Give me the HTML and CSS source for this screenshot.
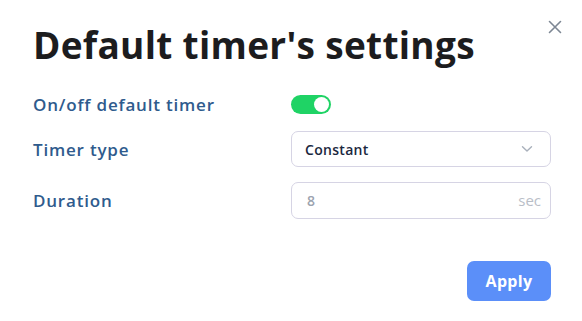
FILE: index.html
```html
<!DOCTYPE html>
<html>
<head>
<meta charset="utf-8">
<link rel="stylesheet" href="styles.css">
</head>
<body>
<div class="dialog">
  <button class="close" aria-label="Close">
    <svg width="14" height="14" viewBox="0 0 14 14"><path d="M1.5 1.5L12.5 12.5M12.5 1.5L1.5 12.5" stroke="#7d8794" stroke-width="1.6" stroke-linecap="round"/></svg>
  </button>
  <h1 class="title">Default timer's settings</h1>
  <div class="form">
    <div class="row row-toggle">
      <span class="label">On/off default timer</span>
      <div class="control"><span class="toggle"><span class="knob"></span></span></div>
    </div>
    <div class="row">
      <span class="label">Timer type</span>
      <div class="control">
        <div class="select">
          <span class="select-value">Constant</span>
          <svg class="chevron" width="12" height="8" viewBox="0 0 12 8"><path d="M1.5 1.8L6 6L10.5 1.8" fill="none" stroke="#a9b0bb" stroke-width="1.4" stroke-linecap="round" stroke-linejoin="round"/></svg>
        </div>
      </div>
    </div>
    <div class="row">
      <span class="label">Duration</span>
      <div class="control">
        <div class="input">
          <span class="input-value">8</span>
          <span class="unit">sec</span>
        </div>
      </div>
    </div>
  </div>
  <div class="footer">
    <button class="apply">Apply</button>
  </div>
</div>
</body>
</html>
```
FILE: styles.css
```css
html, body {
  margin: 0;
  padding: 0;
  background: #ffffff;
}
body {
  font-family: "Open Sans", "Noto Sans", sans-serif;
}
.dialog {
  position: relative;
  width: 582px;
  height: 321px;
  box-sizing: border-box;
  padding: 20px 31px 0 33px;
}
.close {
  position: absolute;
  top: 20px;
  right: 20px;
  width: 14px;
  height: 14px;
  padding: 0;
  border: 0;
  background: none;
  display: flex;
}
.title {
  margin: 0;
  font-size: 37px;
  line-height: 50px;
  font-weight: 700;
  color: #1c1c1e;
  letter-spacing: 0.3px;
}
.form {
  margin-top: 24px;
  display: flex;
  flex-direction: column;
  gap: 15px;
}
.row {
  display: flex;
  align-items: center;
  height: 36px;
}
.row-toggle {
  height: 20px;
  margin-bottom: 2px;
}
.label {
  width: 258px;
  font-size: 17px;
  font-weight: 600;
  color: #2f5b8d;
  letter-spacing: 0.8px;
}
.control {
  width: 260px;
}
.toggle {
  display: flex;
  justify-content: flex-end;
  align-items: center;
  width: 40px;
  height: 19px;
  border-radius: 10px;
  background: #1fd365;
  padding: 0 2px;
  box-sizing: border-box;
}
.knob {
  width: 15px;
  height: 15px;
  border-radius: 50%;
  background: #ffffff;
}
.select, .input {
  height: 36px;
  box-sizing: border-box;
  border: 1px solid #d6d4e4;
  border-radius: 7px;
  display: flex;
  align-items: center;
  justify-content: space-between;
}
.select {
  padding: 0 17px 0 13px;
}
.select-value {
  font-size: 14px;
  font-weight: 600;
  color: #1b2840;
  letter-spacing: 0.3px;
}
.input {
  padding: 0 9px 0 15px;
  height: 37px;
}
.input-value {
  font-size: 14px;
  font-weight: 600;
  color: #9ca3af;
}
.unit {
  font-size: 15px;
  color: #b9bec7;
}
.footer {
  display: flex;
  justify-content: flex-end;
  margin-top: 43px;
}
.apply {
  width: 84px;
  height: 40px;
  border: 0;
  border-radius: 7px;
  background: #5b8ff9;
  color: #ffffff;
  font-family: "Open Sans", "Noto Sans", sans-serif;
  font-size: 16px;
  font-weight: 700;
  letter-spacing: 0.3px;
}
```
